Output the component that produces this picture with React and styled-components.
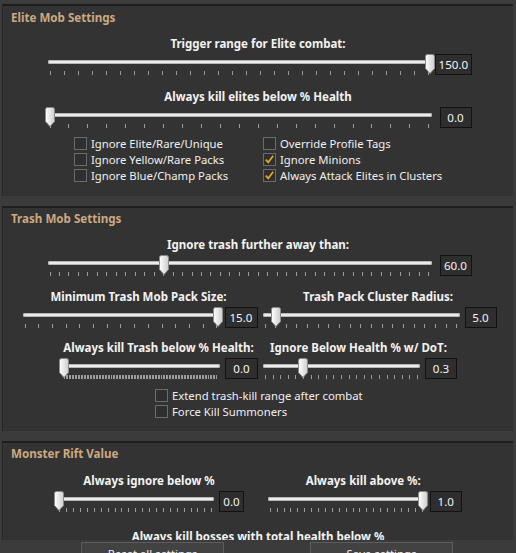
import React from "react";
import styled, { createGlobalStyle } from "styled-components";

const GlobalStyle = createGlobalStyle`
  html, body {
    margin: 0;
    padding: 0;
    overflow: hidden;
    background: #3b3b3b;
  }
  body {
    font-family: "Noto Sans", "Open Sans", sans-serif;
    font-size: 11.3px;
    color: #f0f0f0;
  }
`;

const Window = styled.div`
  height: 566px;
  display: flex;
  flex-direction: column;
`;

const Scroll = styled.div`
  flex: 1;
  min-height: 0;
  overflow: hidden;
  padding: 4px 3px 0 2px;
  display: flex;
  flex-direction: column;
  gap: 10px;
`;

const Group = styled.section`
  flex: none;
  background: #333333;
  border-top: 2px solid #1e1e1e;
  border-left: 1px solid #262626;
  padding: ${(p) => p.$pt || 3}px 0 ${(p) => p.$pb || 0}px;
`;

const Header = styled.h3`
  margin: 0 0 0 8px;
  font-size: 11.6px;
  font-weight: bold;
  line-height: 16px;
  color: #cda982;
`;

const Label = styled.div`
  margin-top: ${(p) => p.$mt || 0}px;
  font-size: 11.5px;
  font-weight: bold;
  line-height: 16px;
  text-align: center;
  white-space: nowrap;
  color: #f2f2f2;
`;

const SliderRow = styled.div`
  display: flex;
  align-items: flex-start;
  margin-top: 2px;
  ${(p) => p.$full && "width: 427px; margin-left: auto; margin-right: auto;"}
`;

const Control = styled.div`
  position: relative;
  flex: none;
  width: ${(p) => p.$w}px;
  height: 21px;
`;

const Track = styled.div`
  margin: 6px 3px 0;
  height: 4px;
  border-radius: 2px;
  background: #ececec;
  box-shadow: inset 0 0 0 1px #b5b5b5;
`;

const Ticks = styled.div`
  display: flex;
  justify-content: space-between;
  margin: 7px 5px 0;
  height: 4px;
`;

const Tick = styled.span`
  width: 1px;
  height: 100%;
  background: #9c9c9c;
`;

const Thumb = styled.svg`
  position: absolute;
  top: 0;
  left: ${(p) => p.$left}px;
  width: 10px;
  height: 20px;
`;

const ValueBox = styled.div`
  flex: none;
  box-sizing: border-box;
  height: 21px;
  min-width: ${(p) => p.$min || 0}px;
  margin-left: ${(p) => (p.$full ? "auto" : "2px")};
  padding: 0 3px;
  border: 1px solid #121212;
  background: #2e2e2e;
  font-size: 11.6px;
  line-height: 19px;
  text-align: center;
  color: #f4f4f4;
`;

const Pair = styled.div`
  display: flex;
  justify-content: center;
  align-items: flex-start;
  gap: ${(p) => p.$gap}px;
  margin-top: ${(p) => p.$mt}px;
`;

const Block = styled.div`
  display: flex;
  flex-direction: column;
  align-items: center;
`;

const CheckGrid = styled.div`
  display: grid;
  grid-template-columns: ${(p) => p.$cols};
  margin: ${(p) => p.$mt}px 0 0 ${(p) => p.$left}px;
`;

const CheckRow = styled.label`
  display: flex;
  align-items: center;
  gap: 4px;
  height: 16px;
  white-space: nowrap;
  color: #f0f0f0;
`;

const Box = styled.span`
  box-sizing: border-box;
  width: 13px;
  height: 13px;
  border: 1px solid #6c6c6c;
  background: #2f2f2f;
  display: flex;
  align-items: center;
  justify-content: center;
`;

const Footer = styled.div`
  flex: none;
  box-sizing: border-box;
  height: 26px;
  padding: 2px 0 0 81px;
  display: flex;
  gap: 86px;
  background: #3b3b3b;
`;

const Button = styled.button`
  width: 143px;
  height: 22px;
  padding: 1px 0 0;
  background: #424242;
  border: 1px solid #5c5c5c;
  color: #f0f0f0;
  font-family: "Noto Sans", "Open Sans", sans-serif;
  font-size: 11.3px;
  line-height: 16px;
`;

const Slider = ({ w, pct, ticks, value, min, full }) => (
  <SliderRow $full={full}>
    <Control $w={w}>
      <Track />
      <Ticks>
        {Array.from({ length: ticks }, (_, i) => (
          <Tick key={i} />
        ))}
      </Ticks>
      <Thumb $left={Math.round(pct * (w - 10))} viewBox="0 0 10 20">
        <defs>
          <linearGradient id="thumbFill" x1="0" x2="1" y1="0" y2="0">
            <stop offset="0" stopColor="#ffffff" />
            <stop offset="1" stopColor="#cdcdcd" />
          </linearGradient>
        </defs>
        <path
          d="M0.5 2.5 Q0.5 0.5 2.5 0.5 H7.5 Q9.5 0.5 9.5 2.5 V14.5 L5 19.5 L0.5 14.5 Z"
          fill="url(#thumbFill)"
          stroke="#8a8a8a"
          strokeWidth="1"
        />
      </Thumb>
    </Control>
    <ValueBox $min={min} $full={full}>
      {value}
    </ValueBox>
  </SliderRow>
);

const Check = ({ label, checked }) => (
  <CheckRow>
    <Box>
      {checked && (
        <svg width="11" height="11" viewBox="0 0 11 11">
          <path
            d="M1.8 5.6 L4.3 8.4 L9.2 1.8"
            fill="none"
            stroke="#e0a52c"
            strokeWidth="1.8"
          />
        </svg>
      )}
    </Box>
    {label}
  </CheckRow>
);

const App = () => (
  <Window>
    <GlobalStyle />
    <Scroll>
      <Group $pt={4} $pb={13}>
        <Header>Elite Mob Settings</Header>
        <Label $mt={10}>Trigger range for Elite combat:</Label>
        <Slider full w={390} pct={1} ticks={28} value="150.0" />
        <Label $mt={14}>Always kill elites below % Health</Label>
        <Slider full w={390} pct={0} ticks={21} value="0.0" min={32} />
        <CheckGrid $cols="189px auto" $mt={7} $left={71}>
          <Check label="Ignore Elite/Rare/Unique" />
          <Check label="Override Profile Tags" />
          <Check label="Ignore Yellow/Rare Packs" />
          <Check label="Ignore Minions" checked />
          <Check label="Ignore Blue/Champ Packs" />
          <Check label="Always Attack Elites in Clusters" checked />
        </CheckGrid>
      </Group>

      <Group $pb={12}>
        <Header>Trash Mob Settings</Header>
        <Label $mt={10}>Ignore trash further away than:</Label>
        <Slider full w={390} pct={0.3} ticks={41} value="60.0" min={32} />
        <Pair $gap={2} $mt={13}>
          <Block>
            <Label>Minimum Trash Mob Pack Size:</Label>
            <Slider w={203} pct={1} ticks={15} value="15.0" min={33} />
          </Block>
          <Block>
            <Label>Trash Pack Cluster Radius:</Label>
            <Slider w={203} pct={5 / 90} ticks={19} value="5.0" min={32} />
          </Block>
        </Pair>
        <Pair $gap={2} $mt={12}>
          <Block>
            <Label>Always kill Trash below % Health:</Label>
            <Slider w={164} pct={0} ticks={101} value="0.0" min={33} />
          </Block>
          <Block>
            <Label>Ignore Below Health % w/ DoT:</Label>
            <Slider w={163} pct={0.25} ticks={21} value="0.3" min={32} />
          </Block>
        </Pair>
        <CheckGrid $cols="auto" $mt={8} $left={152}>
          <Check label="Extend trash-kill range after combat" />
          <Check label="Force Kill Summoners" />
        </CheckGrid>
      </Group>

      <Group $pb={12}>
        <Header>Monster Rift Value</Header>
        <Pair $gap={21} $mt={11}>
          <Block>
            <Label>Always ignore below %</Label>
            <Slider w={163} pct={0} ticks={23} value="0.0" />
          </Block>
          <Block>
            <Label>Always kill above %:</Label>
            <Slider w={163} pct={1} ticks={23} value="1.0" min={32} />
          </Block>
        </Pair>
        <Label $mt={17}>Always kill bosses with total health below %</Label>
        <Slider full w={390} pct={0} ticks={21} value="0.0" min={32} />
      </Group>
    </Scroll>
    <Footer>
      <Button>Reset all settings</Button>
      <Button>Save settings</Button>
    </Footer>
  </Window>
);

export default App;
